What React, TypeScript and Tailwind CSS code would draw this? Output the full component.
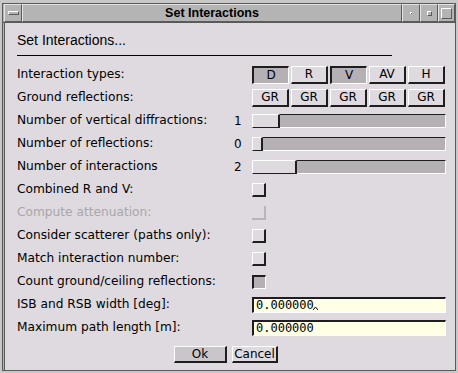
import React from "react";

const raisedBtn =
  "border-t border-l border-t-white border-l-white border-b-2 border-r-2 border-b-[#1e1e1e] border-r-[#1e1e1e]";
const sunkenBtn =
  "border-t-2 border-l-2 border-t-[#1e1e1e] border-l-[#1e1e1e] border-b border-r border-b-white border-r-white";

function Toggle({ label, on }: { label: string; on?: boolean }) {
  return (
    <div
      className={`w-[37px] h-[18px] flex items-center justify-center text-[12px] leading-none text-black ${
        on ? sunkenBtn + " bg-[#b4b0b4]" : raisedBtn + " bg-[#dfdadf]"
      }`}
    >
      {label}
    </div>
  );
}

function Slider({ thumb }: { thumb: number }) {
  return (
    <div className="w-[194px] h-[14px] flex">
      <div
        className="h-full border-t border-l border-t-white border-l-white border-b border-r-2 border-b-[#1e1e1e] border-r-[#1e1e1e] bg-[#dfdadf]"
        style={{ width: thumb }}
      />
      <div className="flex-1 h-full bg-[#b4b0b4] border-t border-t-[#1e1e1e] border-b border-b-white border-r border-r-white" />
    </div>
  );
}

function Check({ state }: { state: "off" | "on" | "disabled" }) {
  if (state === "disabled")
    return <div className="w-[14px] h-[14px] border-b-2 border-r-2 border-b-[#b8b4b8] border-r-[#b8b4b8]" />;
  if (state === "on")
    return (
      <div className="w-[14px] h-[14px] bg-[#b4b0b4] border-t-2 border-l-2 border-t-[#1e1e1e] border-l-[#1e1e1e] border-b border-r border-b-white border-r-white" />
    );
  return (
    <div className="w-[14px] h-[14px] border-t border-l border-t-white border-l-white border-b-2 border-r-2 border-b-[#1e1e1e] border-r-[#1e1e1e]" />
  );
}

function Field({ value, caret }: { value: string; caret?: boolean }) {
  return (
    <div className="w-[194px] h-[16px] bg-[#ffffe6] border-t-2 border-l-2 border-t-[#1e1e1e] border-l-[#1e1e1e] border-b border-r border-b-white border-r-white flex items-center pl-[2px]">
      <span
        className="text-[12px] leading-none text-black"
        style={{ fontFamily: "'DejaVu Sans Mono', 'Liberation Mono', monospace" }}
      >
        {value}
      </span>
      {caret && (
        <svg width="5" height="12" viewBox="0 0 5 12" className="-ml-[1px]">
          <path d="M0 11 L2.5 8 L5 11" stroke="#000" strokeWidth="1" fill="none" />
        </svg>
      )}
    </div>
  );
}

function Row({
  label,
  num,
  children,
  disabled,
}: {
  label: string;
  num?: string;
  children: React.ReactNode;
  disabled?: boolean;
}) {
  return (
    <div className="h-[23px] grid grid-cols-[216px_19px_194px] items-center">
      <div className={`text-[12.2px] leading-none whitespace-nowrap ${disabled ? "text-[#aaa6aa]" : "text-black"}`}>
        {label}
      </div>
      <div className="text-[12px] leading-none text-black pl-[1px]">{num}</div>
      <div className="flex items-center">{children}</div>
    </div>
  );
}

function TitleBtn({ w, children }: { w: string; children?: React.ReactNode }) {
  return (
    <div
      className={`${w} h-full flex items-center justify-center border-t border-l border-t-[#e4e4e4] border-l-[#e4e4e4] border-b border-r border-b-[#5a5a5a] border-r-[#5a5a5a] bg-[#b4b4b4]`}
    >
      {children}
    </div>
  );
}

export default function App() {
  return (
    <div
      className="w-[458px] h-[373px] bg-[#c8c8c8] pt-[3px] px-[2px] pb-[2px]"
      style={{ fontFamily: "'DejaVu Sans', 'Liberation Sans', sans-serif" }}
    >
      <div className="h-full border border-[#5a5a5a] bg-[#b4b4b4] flex flex-col">
        {/* title bar */}
        <div className="h-[19px] flex border-b border-b-[#5a5a5a] pl-[1px]">
          <TitleBtn w="w-[18px]">
            <div className="w-[11px] h-[4px] border-t border-l border-t-white border-l-white border-b border-r border-b-[#5a5a5a] border-r-[#5a5a5a]" />
          </TitleBtn>
          <div className="flex-1 h-full flex items-center justify-center border-t border-l border-t-[#e4e4e4] border-l-[#e4e4e4] border-b border-r border-b-[#5a5a5a] border-r-[#5a5a5a]">
            <span
              className="text-[12.5px] font-bold leading-none text-black"
              style={{ fontFamily: "'Liberation Sans', Arial, sans-serif" }}
            >
              Set Interactions
            </span>
          </div>
          <TitleBtn w="w-[18px]">
            <div className="w-[2px] h-[2px] bg-[#5a5a5a] border-t border-l border-white" />
          </TitleBtn>
          <TitleBtn w="w-[18px]">
            <div className="w-[5px] h-[5px] border-t border-l border-t-white border-l-white border-b border-r border-b-[#5a5a5a] border-r-[#5a5a5a]" />
          </TitleBtn>
          <TitleBtn w="w-[17px]">
            <div className="w-[11px] h-[11px] border-t border-l border-t-white border-l-white border-b border-r border-b-[#5a5a5a] border-r-[#5a5a5a]" />
          </TitleBtn>
        </div>
        {/* content */}
        <div className="flex-1 flex pl-[1px]">
          <div className="flex-1 border-l border-l-[#5a5a5a] bg-[#dfdadf] pl-[12px] flex flex-col">
            <div
              className="mt-[9px] h-[16px] flex items-center text-[14px] leading-none text-black"
              style={{ fontFamily: "'Liberation Sans', Arial, sans-serif" }}
            >
              Set Interactions...
            </div>
            <div className="mt-[7px] w-[375px] h-px bg-black" />
            <div className="mt-[7px] flex flex-col">
              <Row label="Interaction types:">
                <div className="flex gap-[2px]">
                  <Toggle label="D" on />
                  <Toggle label="R" />
                  <Toggle label="V" on />
                  <Toggle label="AV" />
                  <Toggle label="H" />
                </div>
              </Row>
              <Row label="Ground reflections:">
                <div className="flex gap-[2px]">
                  <Toggle label="GR" />
                  <Toggle label="GR" />
                  <Toggle label="GR" />
                  <Toggle label="GR" />
                  <Toggle label="GR" />
                </div>
              </Row>
              <Row label="Number of vertical diffractions:" num="1">
                <Slider thumb={28} />
              </Row>
              <Row label="Number of reflections:" num="0">
                <Slider thumb={11} />
              </Row>
              <Row label="Number of interactions" num="2">
                <Slider thumb={45} />
              </Row>
              <Row label="Combined R and V:">
                <Check state="off" />
              </Row>
              <Row label="Compute attenuation:" disabled>
                <Check state="disabled" />
              </Row>
              <Row label="Consider scatterer (paths only):">
                <Check state="off" />
              </Row>
              <Row label="Match interaction number:">
                <Check state="off" />
              </Row>
              <Row label="Count ground/ceiling reflections:">
                <Check state="on" />
              </Row>
              <Row label="ISB and RSB width [deg]:">
                <Field value="0.000000" caret />
              </Row>
              <Row label="Maximum path length [m]:">
                <Field value="0.000000" />
              </Row>
            </div>
            <div className="mt-[7px] flex gap-[5px] pl-[157px]">
              <div className={`w-[53px] h-[17px] flex items-center justify-center text-[12px] leading-none text-black bg-[#cac5ca] ${raisedBtn}`}>
                Ok
              </div>
              <div className={`w-[46px] h-[17px] flex items-center justify-center text-[12px] leading-none text-black bg-[#dfdadf] ${raisedBtn}`}>
                Cancel
              </div>
            </div>
          </div>
        </div>
      </div>
    </div>
  );
}
